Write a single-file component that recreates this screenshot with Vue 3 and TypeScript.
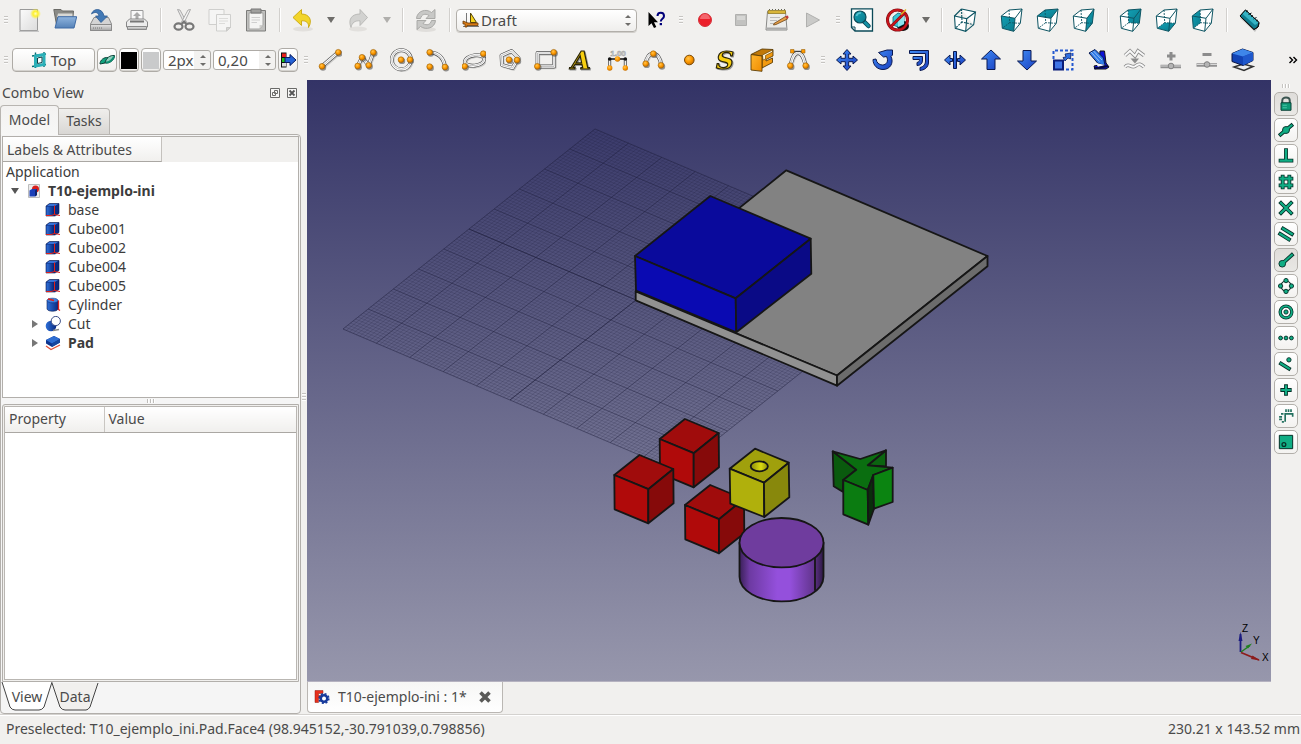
<script setup lang="ts">
import { ref } from 'vue'

interface Tool {
  kind: 'tool' | 'sep' | 'menu' | 'grip'
  icon?: string
  label?: string
  off?: boolean
}
interface Wire {
  id: string
  d: string
  dots: number[][]
}
interface Glyph {
  text: string
  x: number
  y: number
  look: string
}
interface Row {
  name: string
  icon: string
  level: number
  arrow?: 'open' | 'closed'
  bold?: boolean
}

const tool = (icon: string, label: string, off = false): Tool => ({ kind: 'tool', icon, label, off })
const sep: Tool = { kind: 'sep' }
const grip: Tool = { kind: 'grip' }
const menu = (label: string, off = false): Tool => ({ kind: 'menu', label, off })

const fileTools: Tool[] = [
  grip, tool('new', 'New'), tool('open', 'Open'), tool('save', 'Save'), tool('print', 'Print'), sep,
  tool('cut', 'Cut'), tool('copy', 'Copy', true), tool('paste', 'Paste'), sep,
  tool('undo', 'Undo'), menu('Undo history'), tool('redo', 'Redo', true), menu('Redo history', true), sep,
  tool('refresh', 'Refresh', true), sep,
]
const viewTools: Tool[] = [
  tool('whats', "What's this?"), grip,
  tool('record', 'Record macro'), tool('stop', 'Stop macro', true), tool('macros', 'Macros'), tool('play', 'Execute macro', true), grip,
  tool('fit', 'Fit all'), tool('drawstyle', 'Draw style'), menu('Draw style list'), sep,
  tool('axo', 'Axonometric'), sep,
  tool('front', 'Front'), tool('top', 'Top'), tool('right', 'Right'), sep,
  tool('rear', 'Rear'), tool('bottom', 'Bottom'), tool('left', 'Left'), sep,
  tool('ruler', 'Measure distance'),
]
const draftTools: Tool[] = [
  grip, tool('line', 'Line'), tool('wire', 'Wire'), tool('circle', 'Circle'), tool('arc', 'Arc'),
  tool('ellipse', 'Ellipse'), tool('polygon', 'Polygon'), tool('rectangle', 'Rectangle'), tool('text', 'Text'),
  tool('dimension', 'Dimension'), tool('bspline', 'B-spline'), tool('point', 'Point'), tool('shapestring', 'Shape string'),
  tool('facebinder', 'Facebinder'), tool('bezier', 'Bezier curve'), grip,
  tool('move', 'Move'), tool('rotate', 'Rotate'), tool('offset', 'Offset'), tool('trimex', 'Trimex'),
  tool('upgrade', 'Upgrade'), tool('downgrade', 'Downgrade'), tool('scale', 'Scale'), tool('edit', 'Edit'),
  tool('tospline', 'Wire to B-spline', true), tool('addpoint', 'Add point', true), tool('delpoint', 'Remove point', true),
  tool('shape2d', 'Shape 2D view'),
]
const snaps = [
  ['lock', 'Toggle snap', true], ['mid', 'Midpoint'], ['perp', 'Perpendicular'], ['grid', 'Grid'], ['inter', 'Intersection'],
  ['parallel', 'Parallel'], ['end', 'Endpoint', true], ['angle', 'Angle'], ['center', 'Center'], ['ext', 'Extension'],
  ['near', 'Near'], ['ortho', 'Ortho'], ['dims', 'Dimensions'], ['plane', 'Working plane'],
] as [string, string, boolean?][]

/* Letters that are part of an icon */
const glyphs: Record<string, Glyph> = {
  text: { text: 'A', x: 11, y: 21, look: 'gly' },
  shapestring: { text: 'S', x: 11, y: 21, look: 'gly' },
  dimension: { text: '1.00', x: 12, y: 8, look: 'tiny' },
}

const wires: Wire[] = [
  { id: 'line', d: 'M4 18.3L20.3 4.3', dots: [[4, 18.3], [20.3, 4.3]] },
  { id: 'wire', d: 'M3.7 18L8 9.3L14.7 17.3L19.3 4.3', dots: [[3.7, 18], [8, 9.3], [14.7, 17.3], [19.3, 4.3]] },
  { id: 'circle', d: 'M1.7 11.7a9.6 9.6 0 1 0 19.2 0a9.6 9.6 0 1 0 -19.2 0', dots: [[11, 11.7], [20, 11.7]] },
  { id: 'arc', d: 'M3.7 4.3Q17 5 19 19', dots: [[3.7, 4.3], [3.7, 18.7], [19, 19]] },
  { id: 'ellipse', d: 'M2.8 14C3.2 6.6 21.6 4.6 22.2 11C22 18.4 3.8 20 2.8 14Z', dots: [[21.3, 5.7], [2.7, 18.3]] },
  { id: 'polygon', d: 'M3.5 7.5L13.5 3L20.5 10L14.5 20L4 17Z', dots: [[11, 11.7], [19, 12]] },
  { id: 'rectangle', d: 'M3.5 5H20V18.5H3.5Z', dots: [[19.7, 4.3], [3.3, 18.3]] },
  { id: 'bspline', d: 'M3.7 16C4.5 2 18 2 19 17', dots: [[3.7, 15.7], [11.3, 5.7], [19, 17.3]] },
  { id: 'bezier', d: 'M4.3 17.7C6 12 7 5 12 5C17 5 18 12 19.7 17.7', dots: [[4.3, 17.7], [19.7, 17.7]] },
]

const cubeFaces: Record<string, string> = {
  front: '1.3,8 15,10.3 13.7,23.3 2.3,20.3',
  top: '1.3,8 9,2 22,1 15,10.3',
  right: '15,10.3 22,1 20.3,15.3 13.7,23.3',
  rear: '9,2 22,1 20.3,15.3 9.7,14.7',
  bottom: '2.3,20.3 9.7,14.7 20.3,15.3 13.7,23.3',
  left: '1.3,8 9,2 9.7,14.7 2.3,20.3',
}

const rows: Row[] = [
  { name: 'T10-ejemplo-ini', icon: 'doc', level: 0, arrow: 'open', bold: true },
  { name: 'base', icon: 'box', level: 1 },
  { name: 'Cube001', icon: 'box', level: 1 },
  { name: 'Cube002', icon: 'box', level: 1 },
  { name: 'Cube004', icon: 'box', level: 1 },
  { name: 'Cube005', icon: 'box', level: 1 },
  { name: 'Cylinder', icon: 'cylinder', level: 1 },
  { name: 'Cut', icon: 'boolcut', level: 1, arrow: 'closed' },
  { name: 'Pad', icon: 'pad', level: 1, arrow: 'closed', bold: true },
]

/* Working plane: two families of parallel lines spanned by u and v */
const origin = [343, 329]
const u = [334, 142]
const v = [252, -200]
function gridPath(steps: number[]): string {
  return steps
    .map((t) => {
      const [x, y] = origin
      const a = `M${(x + u[0] * t).toFixed(1)} ${(y + u[1] * t).toFixed(1)}l${v[0]} ${v[1]}`
      const b = `M${(x + v[0] * t).toFixed(1)} ${(y + v[1] * t).toFixed(1)}l${u[0]} ${u[1]}`
      return a + b
    })
    .join('')
}
const minorGrid = gridPath(Array.from({ length: 101 }, (_, i) => i / 100))
const majorGrid = gridPath(Array.from({ length: 11 }, (_, i) => i / 10))
const axisGrid = gridPath([0.5])

const redCubes = [
  { x: 659.7, y: 439 },
  { x: 614.3, y: 475 },
  { x: 685, y: 505 },
]

const workbench = ref('Draft')
const lineWidth = ref('2px')
const textSize = ref('0,20')
</script>

<template>
  <div class="app">
    <svg class="sprite" aria-hidden="true">
      <defs>
        <radialGradient id="gDot" cx=".4" cy=".35" r=".7"><stop offset="0" stop-color="#ffc450" /><stop offset=".5" stop-color="#ff9a00" /><stop offset="1" stop-color="#c06a00" /></radialGradient>
        <linearGradient id="gBlue" x1="0" y1="0" x2="1" y2="1"><stop offset="0" stop-color="#3f8cf5" /><stop offset="1" stop-color="#1a3fc0" /></linearGradient>
        <linearGradient id="gPage" x1="0" y1="0" x2="1" y2="1"><stop offset="0" stop-color="#fbfbfb" /><stop offset="1" stop-color="#dcdcdc" /></linearGradient>
        <linearGradient id="gMetal" x1="0" y1="0" x2="0" y2="1"><stop offset="0" stop-color="#e6e6e6" /><stop offset="1" stop-color="#a4a4a4" /></linearGradient>
        <linearGradient id="gFolder" x1="0" y1="0" x2="0" y2="1"><stop offset="0" stop-color="#8fb4de" /><stop offset="1" stop-color="#5582b8" /></linearGradient>
        <linearGradient id="gTeal" x1="0" y1="0" x2="1" y2="1"><stop offset="0" stop-color="#13a0b4" /><stop offset="1" stop-color="#0a7a8c" /></linearGradient>
        <linearGradient id="gOrange" x1="0" y1="0" x2="1" y2="1"><stop offset="0" stop-color="#ffb62e" /><stop offset="1" stop-color="#f08c00" /></linearGradient>
        <linearGradient id="gSolid" x1="0" y1="0" x2="1" y2="0"><stop offset="0" stop-color="#2e70d8" /><stop offset="1" stop-color="#0a2a80" /></linearGradient>
        <radialGradient id="gGlow"><stop offset="0" stop-color="#fffcc0" /><stop offset=".45" stop-color="#fdf02c" /><stop offset="1" stop-color="#fdf02c" stop-opacity="0" /></radialGradient>
      </defs>

      <symbol id="new" viewBox="0 0 24 24"><path d="M3 1.5H20.5V22.5H3Z" fill="url(#gPage)" stroke="#999" /><path d="M2 23.3H22" stroke="#bbb" /><circle cx="18.5" cy="5.7" r="5.5" fill="url(#gGlow)" /></symbol>
      <symbol id="open" viewBox="0 0 24 24"><path d="M.8 1.5H8L9.500 3H20.500L19 19.500H4Z" fill="#8a8a86" stroke="#6a6a66" /><path d="M4 9L5 5.500H19.500V9Z" fill="#d8d8d4" /><path d="M5 8.700H23.700L21 20H2Z" fill="url(#gFolder)" stroke="#3f6ba5" /></symbol>
      <symbol id="save" viewBox="0 0 24 24"><path d="M5 9.500H19.500L22.500 16V22.500H1.500V16Z" fill="#d4d4d4" stroke="#8a8a8a" /><path d="M1.500 16.500H22.500V22.500H1.500Z" fill="url(#gMetal)" stroke="#8a8a8a" /><path d="M4 20H14" stroke="#777" stroke-dasharray="1 1" /><path d="M2.500 6C4 0 13.500-.5 15 8H18.500L12 14.500L6.500 8H10C9 4 6 3.500 2.500 6Z" fill="#4279b5" stroke="#2d5a92" stroke-width=".8" /></symbol>
      <symbol id="print" viewBox="0 0 24 24"><path d="M6 2.500H18V12H6Z" fill="#f8f8f8" stroke="#9a9a9a" /><path d="M12 4L16 8H13.500V11H10.500V8H8Z" fill="#aaa" /><path d="M4.500 11H19.500L22.500 14V19H1.500V14Z" fill="#ececec" stroke="#888" /><path d="M5 13.500H19" stroke="#777" stroke-width="2" /><path d="M2.500 18.500H21.500V21.500H2.500Z" fill="url(#gMetal)" stroke="#8a8a8a" /></symbol>
      <symbol id="cut" viewBox="0 0 24 24"><path d="M5.500 1.500L8 2L14.500 14L12.500 16Z" fill="#e6e6e6" stroke="#9a9a9a" stroke-width=".8" /><path d="M18.500 1.500L16 2L9.500 14L11.500 16Z" fill="#f4f4f4" stroke="#9a9a9a" stroke-width=".8" /><ellipse cx="6.500" cy="18.500" rx="4" ry="3.200" fill="none" stroke="#777" stroke-width="2.200" /><ellipse cx="17.500" cy="18.500" rx="4" ry="3.200" fill="none" stroke="#777" stroke-width="2.200" /><path d="M9.500 16L12 13.500L14.500 16" fill="none" stroke="#777" stroke-width="2" /></symbol>
      <symbol id="copy" viewBox="0 0 24 24"><g fill="#f5f5f4" stroke="#cfcfcd"><path d="M1 1.500H16V16.500H1Z" /><path d="M8.500 6.500H22.500V19.500L18.500 23H8.500Z" /></g><path d="M11 10.500H20M11 13H20M11 15.500H17" stroke="#dcdcda" /><path d="M18.500 23V19.500H22.500Z" fill="#d6d6d4" stroke="#c8c8c6" /></symbol>
      <symbol id="paste" viewBox="0 0 24 24"><path d="M2.500 2.500H21.500V23H2.500Z" fill="#c0c0be" stroke="#7c7c7a" /><path d="M5 5H19V17L15.500 21H5Z" fill="#f4f4f3" stroke="#a5a5a3" /><path d="M7.500 9.500H16M7.500 12H16M7.500 14.500H13" stroke="#cfcfcf" /><path d="M15.500 21V17H19Z" fill="#cfcfcd" /><path d="M7 1H17V5H7Z" fill="#a0a09e" stroke="#777" /></symbol>
      <symbol id="undo" viewBox="0 0 24 24"><ellipse cx="12" cy="21" rx="10" ry="2.500" fill="#e2e0dd" /><path d="M2 9.500L10.500 1.500V6C18 6 22 12 17.500 19.500C18 14.500 15 12.500 10.500 12.800V17.500Z" fill="#f2d52a" stroke="#c9a70c" stroke-width=".9" /></symbol>
      <symbol id="redo" viewBox="0 0 24 24"><ellipse cx="11" cy="21" rx="9" ry="2.500" fill="#e2e0dd" /><path d="M20.500 9.500L13 1.500V6C4 6 1 12 4 19.500C5 14.500 8 12.500 13 12.800V17.500Z" fill="#d2d2d0" stroke="#b5b5b3" stroke-width=".9" /></symbol>
      <symbol id="refresh" viewBox="0 0 24 24"><ellipse cx="12" cy="21.500" rx="10" ry="2.500" fill="#e0dedb" /><g fill="#c8c8c6" stroke="#a4a4a2" stroke-width=".9"><path d="M2.500 10.500C3 3 12 0 17.500 4.500L21 1.500V10.500H12L15 7.500C11 5 7.500 6.500 6.500 10.500Z" /><path d="M21.500 12.500C21 20 12 22.500 6.500 18.500L3 21.500V12.500H12L9 15.500C13 18 16.500 16.500 17.500 12.500Z" /></g></symbol>
      <symbol id="whats" viewBox="0 0 24 24"><path d="M4.500 4V18L7.500 15.200L10 20L12.300 19L10 14.200H14Z" fill="#000" /><path d="M13.500 8C13.500 3.500 20 3.500 20 8C20 11 16.800 10.500 16.800 13.500" fill="none" stroke="#00007a" stroke-width="2" /><path d="M15.700 15H18V17.200H15.700Z" fill="#00007a" /></symbol>
      <symbol id="record" viewBox="0 0 24 24"><circle cx="12" cy="12" r="6.500" fill="#ec1f2a" stroke="#d5333b" /><path d="M7 11A5 5 0 0 1 17 11Z" fill="#f4656c" /></symbol>
      <symbol id="stop" viewBox="0 0 24 24"><path d="M6.500 6.500H17.500V17.500H6.500Z" fill="#c2c2c0" stroke="#b0b0ae" /><path d="M8 8H16V12H8Z" fill="#d6d6d4" /></symbol>
      <symbol id="macros" viewBox="0 0 24 24"><path d="M2.500 3.500H20.500L22 22H1Z" fill="#ececea" stroke="#8a8a88" /><path d="M1.500 20.500H22" stroke="#aaa" stroke-width="2" /><path d="M3 2.500H20.500V5.500H3Z" fill="#d8b53a" stroke="#8a7014" stroke-width=".7" /><path d="M4 1.500H20" stroke="#665" stroke-dasharray="1 2" /><path d="M5 9.500H15M5 12.500H12M5 15.500H10" stroke="#bbb" /><path d="M9 15.500L20.500 8.500L22.500 11L11 16.500L8.500 17Z" fill="#e8a048" stroke="#6b4214" stroke-width=".8" /><path d="M20 8.500L23 7.500L23.500 9.500L22.500 11Z" fill="#c23b3b" /></symbol>
      <symbol id="play" viewBox="0 0 24 24"><path d="M5.500 5L18.500 12L5.500 19Z" fill="#cacac8" stroke="#b0b0ae" /></symbol>
      <symbol id="fit" viewBox="0 0 24 24"><path d="M1.500.8H22.500V23H5L1.500 19.500Z" fill="#fbfdfd" stroke="#0b4a58" stroke-width="1.300" /><path d="M1.500 19H5V23" fill="none" stroke="#0b4a58" /><path d="M13.500 13L18.500 18" stroke="#0b4a58" stroke-width="4.500" stroke-linecap="round" /><path d="M14 13.500L18.500 18" stroke="#1391a5" stroke-width="2.600" stroke-linecap="round" /><circle cx="10" cy="9" r="6" fill="url(#gTeal)" stroke="#0b4a58" stroke-width="1.200" /><path d="M6.500 8A4 4 0 0 1 11 5" fill="none" stroke="#59c3d2" stroke-width="1.500" /></symbol>
      <symbol id="drawstyle" viewBox="0 0 24 24"><ellipse cx="17" cy="18" rx="6" ry="5" fill="#0e0e0e" /><path d="M7 9L12 5L18 7V16L12 19L7 17Z" fill="#3cc7d6" stroke="#0b6a78" stroke-width=".8" /><path d="M12 19V10L18 7V16Z" fill="#8fe6ee" /><circle cx="11.500" cy="12" r="10" fill="none" stroke="#7c1014" stroke-width="3" /><circle cx="11.500" cy="12" r="10" fill="none" stroke="#c9141b" stroke-width="1.800" /><path d="M4.500 19L18.500 5" stroke="#7c1014" stroke-width="3" /><path d="M4.500 19L18.500 5" stroke="#c9141b" stroke-width="1.800" /><path d="M15 6.500L20 1.500" stroke="#e3b51b" stroke-width="1.500" /></symbol>
      <symbol id="axo" viewBox="0 0 24 24"><g fill="none" stroke="#0e5563" stroke-width="1.100"><path d="M1.500 8L13.700 10.700L12.700 23.400L2.300 20.300ZM8.500 1L22.500 4L20.700 16.700M1.500 8L8.500 1M13.700 10.700L22.500 4M12.700 23.400L20.700 16.700" fill="#fff" /><path d="M8.500 1L9 14L20.700 16.700M9 14L2.300 20.300" stroke-dasharray="2 1" /></g></symbol>
      <symbol v-for="(face, id) in cubeFaces" :id="id" :key="id" viewBox="0 0 24 24">
        <polygon points="1.300,8 9,2 22,1 20.300,15.300 13.700,23.300 2.300,20.300" fill="#fff" />
        <polygon :points="face" fill="url(#gTeal)" />
        <g fill="none" stroke="#0e5563" stroke-width="1"><path d="M1.300 8L15 10.300L13.700 23.300L2.300 20.300ZM1.300 8L9 2L22 1L20.300 15.300L13.700 23.300M15 10.300L22 1" /><path d="M9 2L9.700 14.700L20.300 15.300M9.700 14.700L2.300 20.300" stroke-dasharray="2 1" stroke-width=".9" /></g>
      </symbol>
      <symbol id="ruler" viewBox="0 0 24 24"><path d="M2 10L9 3L22 16L17 24Z" fill="#777" opacity=".4" /><path d="M2 8L7.500 2L21 14.500L20 19L16 21.500Z" fill="#0f7d90" stroke="#111" /><path d="M7.500 2L21 14.500L17 17L4 5.500Z" fill="#35b3c4" /><path d="M8 4L10 2.700M10.500 6.500L13.500 5M13 8.500L15 7.500M15.500 11L18.500 9.500M18 13L20 12" stroke="#071a1d" /><path d="M2 8L7.500 2L21 14.500L20 19L16 21.500Z" fill="none" stroke="#111" /></symbol>

      <symbol v-for="w in wires" :id="w.id" :key="w.id" viewBox="0 0 24 24">
        <path :d="w.d" class="shade" transform="translate(1 1)" />
        <path :d="w.d" class="rim" />
        <path :d="w.d" class="core" />
        <path :d="w.d" class="hair" />
        <circle v-for="(p, i) in w.dots" :key="'s' + i" :cx="p[0] + 1" :cy="p[1] + 1.200" r="3.200" fill="#444" opacity=".55" />
        <circle v-for="(p, i) in w.dots" :key="i" :cx="p[0]" :cy="p[1]" r="2.900" fill="url(#gDot)" stroke="#9a6410" stroke-width=".6" />
        <template v-if="w.id === 'bezier'"><path d="M6 3.300H18" stroke="#333" /><path d="M4.500 1.500H8V5H4.500ZM15.500 1.500H19V5H15.500Z" fill="#ff9a00" stroke="#9a6410" stroke-width=".6" /></template>
      </symbol>
      <symbol id="dimension" viewBox="0 0 24 24"><path d="M3.700 11V20M19.300 11V20" stroke="#555" stroke-width="3" /><path d="M3.700 11V20M19.300 11V20" stroke="#fff" stroke-width="1.200" /><path d="M3 11H20" stroke="#111" stroke-width="1.500" /><circle cx="3.700" cy="11" r="1.800" fill="#111" /><circle cx="19.300" cy="11" r="1.800" fill="#111" /><circle cx="3.700" cy="20" r="2.700" fill="url(#gDot)" /><circle cx="19.300" cy="20" r="2.700" fill="url(#gDot)" /><circle cx="11.500" cy="11" r="2.700" fill="url(#gDot)" /></symbol>
      <symbol id="point" viewBox="0 0 24 24"><circle cx="11.300" cy="12" r="4.800" fill="url(#gDot)" stroke="#7a4a08" /></symbol>
      <symbol id="facebinder" viewBox="0 0 24 24"><g stroke="#5c3d06" stroke-width=".9" stroke-linejoin="round"><path d="M12 8L23 3V8L16 11.500V13L22.500 10V14.500L12 20Z" fill="#f29a10" /><path d="M1 6.500L12 1L23 1.500V3L12 8Z" fill="#c07808" /><path d="M12.500 7L22.500 2V4L15.500 7.500V11L13 12Z" fill="#fff2d0" stroke-width=".6" /><path d="M1 6.500L12 8V23.300L1 22Z" fill="url(#gOrange)" /></g></symbol>
      <symbol id="move" viewBox="0 0 24 24"><path d="M12 1.500L16 6H13.700V10.300H18V8L22.500 12L18 16V13.700H13.700V18H16L12 22.500L8 18H10.300V13.700H6V16L1.500 12L6 8V10.300H10.300V6H8Z" class="blue" /></symbol>
      <symbol id="rotate" viewBox="0 0 24 24"><path d="M2 11.500C2 17.500 6.500 21.500 12 21.500C19.500 21.500 23 14.500 20 8.500L21.500 7V2H16L7.500 4.500L12.500 9L15.500 8.500C18 13 15.500 17 11.500 17C8 17 5.500 14.500 5 11Z" class="blue" /></symbol>
      <symbol id="offset" viewBox="0 0 24 24"><path d="M2.500 2.500H21.500V14C21.500 20 17 22 13 22.500V19.500C17 18.500 18.500 16 18.500 13V5.500H2.500Z" class="blue" /><path d="M6 8.500H15.500V12C15.500 15 14 17.500 10 17.500V14.500C12 14 12.500 13 12.500 11.500H6Z" class="blue" /></symbol>
      <symbol id="trimex" viewBox="0 0 24 24"><path d="M1.500 12L7 7V10.500H9.500V13.500H7V17ZM22.500 12L17 7V10.500H14.500V13.500H17V17Z" class="blue" /><path d="M10.500 3.500H13.500V20.500H10.500Z" class="blue" /></symbol>
      <symbol id="upgrade" viewBox="0 0 24 24"><path d="M12 2L21.500 11H16V21.500H8V11H2.500Z" class="blue" /></symbol>
      <symbol id="downgrade" viewBox="0 0 24 24"><path d="M12 22L21.500 13H16V2.500H8V13H2.500Z" class="blue" /></symbol>
      <symbol id="scale" viewBox="0 0 24 24"><path d="M2.500 11V2.500H21.500V21.500H14" fill="none" stroke="#2458d0" stroke-width="2" stroke-dasharray="3 2" /><path d="M3 12.500H12V21.500H3Z" fill="#3f74e6" stroke="#0a1c78" stroke-width="2" /><path d="M12 9.500L15 9L14 6L20 5L19.500 11L17 10L14 13Z" fill="#2f6fe0" stroke="#0a1c60" stroke-width=".8" /></symbol>
      <symbol id="edit" viewBox="0 0 24 24"><path d="M13 3H17.500L19 15L22 19L19 21H8L7 18L12 17Z" fill="#0d12d8" stroke="#111" /><path d="M2 5L8 1.500L16.500 10L18 17.500L11 15.500Z" fill="#2f7be8" stroke="#081850" /><path d="M4 4L12.500 13.500M6.500 3L15 12" stroke="#9cc2f5" stroke-width="1" /><path d="M9 15L18 17L11 19Z" fill="#f4f6fb" /><path d="M7 20.500L21 18" stroke="#060a40" stroke-width="2" /></symbol>
      <symbol id="tospline" viewBox="0 0 24 24"><g fill="none"><path d="M2 7.500L7 3L12 8L15 3L21 7.500M2 19C6 14 8 21 12.500 18C16 15 18 16 21 19" stroke="#8a8a8a" stroke-width="3.600" /><path d="M2 7.500L7 3L12 8L15 3L21 7.500M2 19C6 14 8 21 12.500 18C16 15 18 16 21 19" stroke="#f8f8f8" stroke-width="2" /></g><path d="M7.500 10.500H16L12 15.500Z" fill="#8c8c8c" /></symbol>
      <symbol id="addpoint" viewBox="0 0 24 24"><path d="M12 4V12.500M8 8H16.500" stroke="#8c8c8c" stroke-width="3" /><path d="M1.500 18.500H22" stroke="#909090" stroke-width="3.500" /><path d="M1.500 18H22" stroke="#d8d8d8" /><circle cx="12" cy="18" r="2.800" fill="#b4b4b4" stroke="#808080" /></symbol>
      <symbol id="delpoint" viewBox="0 0 24 24"><path d="M7.500 6.500H16.500" stroke="#8c8c8c" stroke-width="3" /><path d="M1.500 17H22" stroke="#909090" stroke-width="3.500" /><path d="M1.500 16.500H22" stroke="#d8d8d8" /><circle cx="12" cy="16.500" r="2.800" fill="#b4b4b4" stroke="#808080" /></symbol>
      <symbol id="shape2d" viewBox="0 0 24 24"><path d="M3 19L12 16L22 18.500L13 22.500Z" fill="#eee" stroke="#333" stroke-width="1.500" /><path d="M1 5.500L11.500 1L22 4.500V12.500L12 17.500L1 13.500Z" fill="#1243b5" stroke="#0a1440" /><path d="M1 5.500L11.500 1L22 4.500L12 8.500Z" fill="#3e86ea" /><path d="M12 8.500L22 4.500V12.500L12 17.500Z" fill="#1f58cc" /></symbol>

      <symbol id="plane" viewBox="0 0 24 24"><path d="M4 4H20V20H4Z" fill="#10ad84" stroke="#052f27" stroke-width="1.200" /><circle cx="9.500" cy="15" r="2.300" fill="none" stroke="#052f27" stroke-width="1.500" /></symbol>
      <symbol id="lock" viewBox="0 0 24 24"><path d="M7.500 12V8C7.500 3 16.500 3 16.500 8V12" fill="none" stroke="#3b5551" stroke-width="2.400" /><path d="M6 10.500H18V19.500H6Z" fill="#0f9a77" stroke="#0a4036" stroke-width="1.200" /><path d="M8 13.500H13M8 16.500H13" stroke="#55cdb0" /></symbol>
      <symbol id="mid" viewBox="0 0 24 24"><path d="M5.500 17.500L18.500 6.500" class="so" /><circle cx="12" cy="12" r="4.200" class="sd" /><path d="M5.500 17.500L18.500 6.500" class="si" /></symbol>
      <symbol id="perp" viewBox="0 0 24 24"><path d="M12 5V17.500M5.500 17.500H18.500" class="so" /><path d="M12 5V17.500M5.500 17.500H18.500" class="si" /></symbol>
      <symbol id="grid" viewBox="0 0 24 24"><path d="M8 5.500V18.500M16 5.500V18.500M5.500 8H18.500M5.500 16H18.500" class="so" /><path d="M8 5.500V18.500M16 5.500V18.500M5.500 8H18.500M5.500 16H18.500" class="si" /></symbol>
      <symbol id="inter" viewBox="0 0 24 24"><path d="M6 6L18 18M18 6L6 18" class="so" /><path d="M6 6L18 18M18 6L6 18" class="si" /></symbol>
      <symbol id="parallel" viewBox="0 0 24 24"><path d="M8.500 5.500L19 12M5 12L15.500 18.500" class="so" /><path d="M8.500 5.500L19 12M5 12L15.500 18.500" class="si" /></symbol>
      <symbol id="end" viewBox="0 0 24 24"><path d="M8 16L19 6" class="so" /><circle cx="7.500" cy="16.500" r="4" class="sd" /><path d="M8 16L19 6" class="si" /></symbol>
      <symbol id="angle" viewBox="0 0 24 24"><circle cx="12" cy="12" r="6" fill="none" stroke="#052f27" stroke-width="1.300" /><circle v-for="p in [[12, 5.500], [12, 18.500], [5.500, 12], [18.500, 12]]" :key="p.join()" :cx="p[0]" :cy="p[1]" r="2.600" class="sd" /></symbol>
      <symbol id="center" viewBox="0 0 24 24"><circle cx="12" cy="12" r="7" fill="none" stroke="#052f27" stroke-width="4" /><circle cx="12" cy="12" r="7" fill="none" stroke="#10ad84" stroke-width="2.200" /><circle cx="12" cy="12" r="2.500" class="sd" /></symbol>
      <symbol id="ext" viewBox="0 0 24 24"><circle v-for="x in [5.500, 12, 18.500]" :key="x" :cx="x" cy="12" r="2.300" class="sd" /></symbol>
      <symbol id="near" viewBox="0 0 24 24"><path d="M6 11.500L15.500 17.500" class="so" /><path d="M6 11.500L15.500 17.500" class="si" /><circle cx="15.500" cy="7" r="2.600" class="sd" /></symbol>
      <symbol id="ortho" viewBox="0 0 24 24"><path d="M12 7.500V16.500M7.500 12H16.500" class="so" /><path d="M12 7.500V16.500M7.500 12H16.500" class="si" /></symbol>
      <symbol id="dims" viewBox="0 0 24 24"><path d="M11 19V9.500H20V13M6 9.500H9M7 19H9.500" fill="none" stroke="#23705f" stroke-width="2" /><path d="M11 5.500H20M5.500 12V17" fill="none" stroke="#23705f" stroke-width="3.500" stroke-dasharray="2 1" /></symbol>

      <symbol id="doc" viewBox="0 0 16 16"><path d="M2.500 1.500H13.500V14.500H2.500Z" fill="#ececec" stroke="#bcbcbc" /><circle cx="9.500" cy="6" r="3.500" fill="#d8201c" /><path d="M3.500 7.500L6 6H11V12L9 13.500H3.500Z" fill="#1b3fb8" /><path d="M9 7.500V13.500L11 12V6Z" fill="#0c2270" /></symbol>
      <symbol id="box" viewBox="0 0 16 16"><path d="M1 4L4.500 1.500H14V11.500L10 14H1Z" fill="#0b2a80" stroke="#071a50" stroke-width=".6" /><path d="M1.500 4.500H8.500V13.500H1.500Z" fill="url(#gSolid)" /><path d="M2 4L4.500 2H13L10 4Z" fill="#3671d6" /><path d="M9.500 3.500V12.500M1 13.500H6L9.500 12.500L15 13.500" fill="none" stroke="#e0201a" /></symbol>
      <symbol id="cylinder" viewBox="0 0 16 16"><path d="M2 3.500V12C3 15 12 15 13 12V3.500Z" fill="url(#gSolid)" stroke="#071a50" stroke-width=".6" /><ellipse cx="7.500" cy="3.500" rx="5.500" ry="2.300" fill="#3f82de" stroke="#0b2a80" stroke-width=".6" /><path d="M9 3.500L3 2M13.500 3.500V12.500L15 13.500" fill="none" stroke="#e0201a" stroke-width="1.300" /></symbol>
      <symbol id="boolcut" viewBox="0 0 16 16"><circle cx="6" cy="10" r="5.300" fill="url(#gSolid)" /><path d="M8 14.500L14 13.500" stroke="#888" stroke-width="1.500" /><circle cx="10.800" cy="5" r="4.600" fill="#fff" stroke="#3d4f88" /></symbol>
      <symbol id="pad" viewBox="0 0 16 16"><path d="M1 11L6 14.500L15 10" fill="none" stroke="#e05038" stroke-width="1.200" /><path d="M1 5L9 1L15 4V7.500L7 12L1 8.500Z" fill="#0d358f" /><path d="M1 5L9 1L15 4L7 8.500Z" fill="#2e6dd2" /><path d="M7 8.500L15 4V7.500L7 12Z" fill="#16479f" /></symbol>
      <symbol id="freecad" viewBox="0 0 16 16"><path d="M1 1.500H9V4.500H4.500V6.500H8V9.500H4.500V13.500H1Z" fill="#e8301c" stroke="#8c1a10" stroke-width=".5" /><circle cx="10" cy="9.500" r="3.200" fill="none" stroke="#173a9c" stroke-width="2.600" /><circle cx="10" cy="9.500" r="4.800" fill="none" stroke="#173a9c" stroke-width="1.600" stroke-dasharray="2 1.770" /><circle cx="10" cy="9.500" r="1.700" fill="#fff" /></symbol>
      <symbol id="draft" viewBox="0 0 18 18"><path d="M4.500 2V14M1 15.500H17" stroke="#777" /><path d="M8.500 2V11.500H14.500Z" fill="#f7d21a" stroke="#55460a" /><path d="M1 10L6 12H16V14.500H5V16H3V13H1Z" fill="#d87a14" stroke="#6a3a06" stroke-width=".8" /></symbol>
      <symbol id="planebtn" viewBox="0 0 18 18"><path d="M1 5L15 3M1 15.500L15 13.500M4.500 1.500V17M13 1V16" stroke="#0a6a70" stroke-width="1.400" /><path d="M4.500 5L13 3.500V13.500L4.500 15Z" fill="#fff" stroke="#2bb0b8" stroke-width="3" /><path d="M6.500 7L11 6V11.500L6.500 12.500Z" fill="#fff" stroke="#083f45" /></symbol>
      <symbol id="leaf" viewBox="0 0 18 18"><path d="M2 13C2 9 6 6 10 6.500L7 12Z" fill="#12a37f" stroke="#0a4238" /><path d="M7 12C8 7 12 4 16.500 4.500C16.500 9 12 12.500 7 12Z" fill="#8fd0bd" stroke="#0a4238" /><path d="M8 11.500C11 11.500 15 9 16 5.500" fill="none" stroke="#0f8f72" stroke-width="2" /></symbol>
      <symbol id="apply" viewBox="0 0 18 18"><path d="M2 1.500H7.500V16.500H2Z" fill="#111" /><path d="M3 2.500H7V6H3Z" fill="#e8201c" /><path d="M3 7H7V11H3Z" fill="#18c01c" /><path d="M3 12H7V15.500H3Z" fill="#ddd" /><path d="M6 6.500H11V3.500L17 9L11 14.500V11.500H6Z" fill="#2563d6" stroke="#0a1c60" /></symbol>
    </svg>

    <header class="toolbars">
      <div class="bar" role="toolbar" aria-label="File and view">
        <template v-for="(t, i) in fileTools" :key="i">
          <button v-if="t.kind === 'tool'" type="button" class="tool" :aria-label="t.label" :disabled="t.off"><svg class="ic"><use :href="'#' + t.icon" /></svg></button>
          <button v-else-if="t.kind === 'menu'" type="button" class="drop" :class="{ dim: t.off }" :aria-label="t.label"></button>
          <span v-else :class="t.kind"></span>
        </template>
        <div class="workbench">
          <svg class="ic18"><use href="#draft" /></svg>
          <select v-model="workbench" aria-label="Workbench"><option>Draft</option></select>
          <span class="updown"></span>
        </div>
        <template v-for="(t, i) in viewTools" :key="'v' + i">
          <button v-if="t.kind === 'tool'" type="button" class="tool" :aria-label="t.label" :disabled="t.off"><svg class="ic"><use :href="'#' + t.icon" /></svg></button>
          <button v-else-if="t.kind === 'menu'" type="button" class="drop" :aria-label="t.label"></button>
          <span v-else :class="t.kind"></span>
        </template>
      </div>

      <div class="bar" role="toolbar" aria-label="Draft">
        <span class="grip"></span>
        <div class="settings">
          <button type="button" class="raised wide"><svg class="ic18"><use href="#planebtn" /></svg>Top</button>
          <button type="button" class="raised" aria-label="Construction mode"><svg class="ic18"><use href="#leaf" /></svg></button>
          <button type="button" class="raised" aria-label="Line color"><i class="swatch black"></i></button>
          <button type="button" class="raised" aria-label="Face color"><i class="swatch grey"></i></button>
          <div class="spin small"><input v-model="lineWidth" aria-label="Line width" /><span class="updown"></span></div>
          <div class="spin"><input v-model="textSize" aria-label="Text size" /><span class="updown"></span></div>
          <button type="button" class="raised" aria-label="Apply style"><svg class="ic18"><use href="#apply" /></svg></button>
        </div>
        <template v-for="(t, i) in draftTools" :key="i">
          <button v-if="t.kind === 'tool'" type="button" class="tool" :aria-label="t.label" :disabled="t.off">
            <svg class="ic">
              <use :href="'#' + t.icon" />
              <text v-if="glyphs[t.icon!]" :x="glyphs[t.icon!].x" :y="glyphs[t.icon!].y" :class="glyphs[t.icon!].look" text-anchor="middle">{{ glyphs[t.icon!].text }}</text>
            </svg>
          </button>
          <span v-else :class="t.kind"></span>
        </template>
        <button type="button" class="more" aria-label="More tools"><svg viewBox="0 0 8 8"><path d="M.5 1L3.500 4L.5 7M4.500 1L7.500 4L4.500 7" fill="none" stroke="#000" stroke-width="1.400" /></svg></button>
      </div>
    </header>

    <main class="work">
      <aside class="combo">
        <div class="title">
          <span>Combo View</span>
          <button type="button" aria-label="Float"><svg viewBox="0 0 12 12"><path d="M1.500 1.500H10.500V10.500H1.500Z" fill="#f7f7f6" stroke="#6a6a68" /><path d="M5.500 3.500H8.500V6.500H5.500ZM3.500 5.500H6.500V8.500H3.500Z" fill="none" stroke="#6a6a68" /></svg></button>
          <button type="button" aria-label="Close"><svg viewBox="0 0 12 12"><path d="M1.500 1.500H10.500V10.500H1.500Z" fill="#f7f7f6" stroke="#6a6a68" /><path d="M3.500 3.500L8.500 8.500M8.500 3.500L3.500 8.500" stroke="#555" stroke-width="1.800" /></svg></button>
        </div>
        <div class="tabs" role="tablist">
          <button type="button" role="tab" aria-selected="true" class="on">Model</button>
          <button type="button" role="tab" aria-selected="false">Tasks</button>
        </div>
        <div class="pane">
          <section class="tree">
            <div class="treehead"><span>Labels &amp; Attributes</span></div>
            <p>Application</p>
            <ul>
              <li v-for="r in rows" :key="r.name" :class="['level' + r.level, { bold: r.bold }]">
                <i class="arrow" :class="r.arrow"></i>
                <svg class="ic16"><use :href="'#' + r.icon" /></svg>
                <span>{{ r.name }}</span>
              </li>
            </ul>
          </section>
          <div class="split"></div>
          <section class="props">
            <table>
              <thead><tr><th scope="col" class="prop">Property</th><th scope="col">Value</th></tr></thead>
            </table>
          </section>
          <div class="foot" role="tablist">
            <button type="button" role="tab" aria-selected="true"><svg viewBox="0 0 50 30"><path d="M0 0L8 25Q10 28 13 28H37Q40 28 42 25L50 0" fill="#fff" stroke="#444" /></svg><span>View</span></button>
            <button type="button" role="tab" aria-selected="false"><svg viewBox="0 0 46 30"><path d="M0 1L8 25Q10 28 13 28H34Q36 28 38 25L46 1" fill="#f1f0ee" stroke="#444" /></svg><span>Data</span></button>
          </div>
        </div>
      </aside>
      <div class="gutter"></div>

      <section class="center">
        <div class="viewport">
          <svg class="scene" viewBox="307 80 964 602" role="img" aria-label="3D scene">
            <defs>
              <linearGradient id="gCyl" x1="0" x2="1"><stop offset="0" stop-color="#3a2058" /><stop offset=".12" stop-color="#6d3aa2" /><stop offset=".45" stop-color="#9450dc" /><stop offset=".6" stop-color="#9450dc" /><stop offset=".88" stop-color="#63358f" /><stop offset="1" stop-color="#2c1842" /></linearGradient>
              <linearGradient id="gHole" x1="0" x2="1"><stop offset="0" stop-color="#8c8c0c" /><stop offset=".6" stop-color="#dcdc10" /><stop offset="1" stop-color="#8c8c0c" /></linearGradient>
            </defs>
            <g fill="none" stroke="#1c1c38">
              <path :d="minorGrid" stroke-width="1" stroke-opacity=".18" />
              <path :d="majorGrid" stroke-width="1" stroke-opacity=".32" />
              <path :d="axisGrid" stroke-width="1" stroke-opacity=".4" />
            </g>
            <g stroke="#161616" stroke-width="1.800" stroke-linejoin="round">
              <polygon points="786.300,170.300 987.500,256 837,375.500 635.700,291.300" fill="#828282" />
              <polygon points="635.700,291.300 837,375.500 837,385.700 635.700,300.300" fill="#919191" />
              <polygon points="837,375.500 987.500,256 987.500,266.300 837,385.700" fill="#6c6c6c" />
              <polygon points="710.300,196 810.700,238.700 735.700,298.300 635,256" fill="#0a0a9c" />
              <polygon points="635,256 735.700,298.300 736.300,332.300 636,290.700" fill="#0a0ab2" />
              <polygon points="735.700,298.300 810.700,238.700 811.300,273.700 736.300,332.300" fill="#0a0a86" />

              <g v-for="(c, i) in redCubes" :key="i" :transform="`translate(${c.x} ${c.y})`">
                <polygon points="0,0 25.200,-20 59,-6 34,14.200" fill="#a00c0c" />
                <polygon points="0,0 34,14.200 34,48.300 .3,34.300" fill="#b00a0a" />
                <polygon points="34,14.200 59,-6 59.300,28.300 34,48.300" fill="#860a0a" />
              </g>

              <polygon points="755,448.700 788.700,462.700 764,482.700 729.700,468.700" fill="#a0a00c" />
              <polygon points="729.700,468.700 764,482.700 764.300,517 730.300,503.700" fill="#b0b00c" />
              <polygon points="764,482.700 788.700,462.700 789.300,497.300 764.300,517" fill="#88880c" />
              <ellipse cx="759.300" cy="466.300" rx="8.600" ry="5" fill="url(#gHole)" />

              <polygon points="832.700,451.300 856.300,469.700 843.300,480 842.700,491.700 833.700,486.300" fill="#0a5a0e" />
              <polygon points="886,450.300 867.700,465.300 886,466.300" fill="#0b6410" />
              <polygon points="832.700,451.300 860.300,459 886,450.300 867.700,465.300 892.700,467.700 873.300,475 867.700,490 843.300,480 856.300,469.700" fill="#0a6e10" />
              <polygon points="843.300,480 867.700,490 868.300,524.700 843.300,514.300" fill="#0b7c11" />
              <polygon points="867.700,490 873.300,475 874,508.700 868.300,524.700" fill="#0a2e0c" />
              <polygon points="873.300,475 892.700,467.700 892.700,502 874,508.700" fill="#0b8411" />

              <path d="M739.500 542.700V576.700A42 24.700 0 0 0 823.500 576.700V542.700Z" fill="url(#gCyl)" />
              <ellipse cx="781.500" cy="542.700" rx="42" ry="24.700" fill="#6f3c9e" />
              <path d="M815 557.700V590.700" />
            </g>
          </svg>
          <svg class="axes" viewBox="0 0 34 42" role="img" aria-label="Axis cross">
            <path d="M6.500 26V8" stroke="#1c1c80" stroke-width="1.800" /><path d="M6.500 6L8.500 15H4.500Z" fill="#1c1c80" />
            <path d="M7 26L16 19.500" stroke="#208020" stroke-width="1.500" /><path d="M18 17.500L14 22.500L11.500 20Z" fill="#208020" />
            <path d="M7 26.500L25 34" stroke="#8c1c1c" stroke-width="1.800" /><path d="M26 34.500L17 33L18.500 29.500Z" fill="#8c1c1c" />
            <text x="8" y="6">Z</text><text x="19" y="18">Y</text><text x="28" y="35">X</text>
          </svg>
        </div>
        <div class="doctabs" role="tablist">
          <div class="doctab">
            <svg class="ic16"><use href="#freecad" /></svg>
            <span role="tab" aria-selected="true">T10-ejemplo-ini : 1*</span>
            <button type="button" aria-label="Close document"><svg viewBox="0 0 12 12"><path d="M1.500 1.500L10.500 10.500M10.500 1.500L1.500 10.500" stroke="#5a5a58" stroke-width="3.600" /></svg></button>
          </div>
        </div>
      </section>

      <aside class="snapbar" role="toolbar" aria-label="Snap">
        <span class="vgrip"></span>
        <button v-for="[icon, label, on] in snaps" :key="icon" type="button" class="snap" :class="{ on }" :aria-label="label"><svg class="ic20"><use :href="'#' + icon" /></svg></button>
      </aside>
    </main>

    <footer class="status"><span>Preselected: T10_ejemplo_ini.Pad.Face4 (98.945152,-30.791039,0.798856)</span><span>230.21 x 143.52 mm</span></footer>
  </div>
</template>

<style>
body { margin: 0; background: #f1f0ee; }
</style>

<style scoped>
.app { display: flex; flex-direction: column; height: 100vh; overflow: hidden; background: #f1f0ee; color: #4a4a4a; font: 14px/18px "Noto Sans", "Open Sans", sans-serif; }
.app *, .app *::before, .app *::after { box-sizing: border-box; }
.sprite { position: absolute; width: 0; height: 0; }
button, input, select { font: inherit; color: inherit; margin: 0; padding: 0; border: 0; background: none; min-width: 0; outline: 0; }
svg { display: block; flex: none; overflow: visible; }
.ic { width: 24px; height: 24px; }
.ic20 { width: 20px; height: 20px; }
.ic18 { width: 18px; height: 18px; }
.ic16 { width: 16px; height: 16px; }

.shade, .rim, .core, .hair { fill: none; stroke-linejoin: round; }
.shade { stroke: #555; stroke-width: 3.5px; opacity: .25; }
.rim { stroke: #4a4a4a; stroke-width: 3.8px; }
.core { stroke: #fff; stroke-width: 2.6px; }
.hair { stroke: #999; stroke-width: .6px; }
.blue { fill: url(#gBlue); stroke: #0a1850; stroke-width: 1px; stroke-linejoin: round; }
.gly { font: italic bold 25px "DejaVu Serif", serif; fill: #f8cf10; stroke: #2a2408; stroke-width: 1.2px; filter: drop-shadow(1px 1px 0 #999); }
.tiny { font: bold 8px "Liberation Sans", sans-serif; fill: #fff; stroke: #999; stroke-width: .6px; }
.so { fill: none; stroke: #052f27; stroke-width: 4.6px; stroke-linecap: square; }
.si { fill: none; stroke: #10ad84; stroke-width: 2.6px; stroke-linecap: square; }
.sd { fill: #10ad84; stroke: #052f27; stroke-width: 1.1px; }

.toolbars { flex: none; }
.bar { display: flex; align-items: center; height: 40px; }
.tool { flex: none; width: 36px; height: 36px; display: grid; place-items: center; }
.drop { flex: none; width: 20px; height: 36px; display: grid; place-items: center; }
.drop::before { content: ""; border: 4px solid transparent; border-top: 6px solid #6e6d6a; border-bottom: 0; }
.drop.dim::before { border-top-color: #b0afac; }
.sep { flex: none; width: 11px; height: 24px; display: flex; justify-content: center; }
.sep::before { content: ""; width: 2px; border-left: 1px solid #d2d0cd; border-right: 1px solid #fff; }
.grip { flex: none; width: 13px; height: 9px; display: flex; justify-content: center; }
.grip:first-child { width: 11px; }
.grip::before { content: ""; width: 4px; background: repeating-linear-gradient(#c6c4c1 0 1px, #fbfbfb 1px 2px, transparent 2px 3px); }
.workbench { flex: none; position: relative; width: 181px; height: 23px; margin: 0 1px; border: 1px solid #b2afaa; border-radius: 4px; background: linear-gradient(#fff, #efeeec); display: flex; align-items: center; padding-left: 5px; box-shadow: 0 1px 0 #d0ceca; }
.workbench select { appearance: none; flex: 1; height: 21px; padding-left: 1px; font-size: 15px; }
.workbench .updown { position: absolute; right: 1px; top: 0; bottom: 0; width: 14px; pointer-events: none; }
.updown { display: flex; flex-direction: column; align-items: center; justify-content: center; gap: 5px; flex: none; width: 15px; }
.updown::before { content: ""; border: 3px solid transparent; border-top: 0; border-bottom: 3px solid #6e6d6a; }
.updown::after { content: ""; border: 3px solid transparent; border-bottom: 0; border-top: 3px solid #6e6d6a; }
.settings { display: flex; gap: 2px; margin: 0 1px; }
.raised { width: 20px; height: 24px; border: 1px solid #aeaba6; border-radius: 4px; background: linear-gradient(#fff, #f0efed); box-shadow: inset 0 -1px 0 #d4d2ce; display: flex; align-items: center; justify-content: center; font-size: 15px; }
.raised.wide { width: 83px; gap: 2px; }
.swatch { flex: none; width: 16px; height: 17px; }
.swatch.black { background: #000; }
.swatch.grey { background: #c9cacb; }
.spin { display: flex; width: 63px; height: 20px; margin: 2px 0; border: 1px solid #aeaba6; border-radius: 3px; background: linear-gradient(90deg, #fff calc(100% - 16px), #f3f2f0 0); font-size: 15px; }
.spin.small { width: 48px; }
.spin input { flex: 1; width: 0; padding-left: 4px; }
.more { margin: 0 3px 0 auto; width: 9px; }
.more svg { width: 8px; height: 8px; }

.work { flex: 1; min-height: 0; display: flex; }
.combo { flex: none; width: 301px; display: flex; flex-direction: column; }
.title { flex: none; height: 25px; display: flex; align-items: center; gap: 5px; padding: 0 3px 0 2px; }
.title span { flex: 1; }
.title button { width: 12px; height: 12px; }
.tabs { flex: none; height: 30px; display: flex; align-items: flex-end; margin-bottom: -1px; position: relative; }
.tabs button { height: 27px; width: 51px; padding-bottom: 2px; border: 1px solid #b8b5b1; border-left: 0; border-radius: 0 4px 0 0; background: linear-gradient(#efeeec, #d9d7d4); }
.tabs .on { height: 30px; width: 59px; border-left: 1px solid #b8b5b1; border-bottom: 0; border-radius: 4px 4px 0 0; background: linear-gradient(#f3f2f1, #f7f7f6); }
.pane { flex: 1; min-height: 0; display: flex; flex-direction: column; border: 1px solid #b2afab; border-radius: 0 4px 4px 4px; background: #f5f5f5; padding: 1px; }
.tree { flex: 265; border: 1px solid #b2afab; background: #fff; color: #3c3c3c; line-height: 19px; }
.treehead { height: 25px; background: #f1f0ee; }
.treehead span { display: block; width: 159px; height: 25px; line-height: 25px; padding-left: 4px; border-right: 1px solid #c4c1bd; border-bottom: 1px solid #aaa7a3; background: linear-gradient(#fff, #f1f0ee); color: #4a4a4a; }
.tree p { margin: 0; padding-left: 3px; }
.tree ul { list-style: none; margin: 0; padding: 0; }
.tree li { display: flex; align-items: center; height: 19px; }
.arrow { flex: none; width: 20px; display: grid; place-items: center; }
.arrow.open::before { content: ""; border: 4px solid transparent; border-top: 6px solid #555; border-bottom: 0; }
.arrow.closed::before { content: ""; border: 4px solid transparent; border-left: 6px solid #777; border-right: 0; }
.level0 { padding-left: 2px; }
.level0 .ic16 { margin: 0 6px 0 1px; }
.level1 { padding-left: 22px; }
.level1 .ic16 { margin: 0 7px 0 0; }
.bold { font-weight: 700; }
.split { flex: none; height: 6px; display: flex; justify-content: center; align-items: center; }
.split::before { content: ""; width: 8px; height: 4px; background: repeating-linear-gradient(90deg, #bfbdba 0 1px, #fff 1px 2px, transparent 2px 3px); }
.props { flex: 278; border: 1px solid #b2afab; padding: 2px; border-radius: 3px 0 0 0; display: flex; background: #fff; box-shadow: inset 0 0 0 1px #f1f0ee, inset 0 0 0 2px #b9b6b2; }
table { flex: 1; align-self: flex-start; border-collapse: collapse; }
th { height: 26px; padding: 0 4px; text-align: left; font-weight: 400; background: linear-gradient(#fff, #f0efed); border-bottom: 1px solid #aaa7a3; }
.prop { width: 99px; border-right: 1px solid #c9c6c2; }
.foot { flex: none; height: 30px; display: flex; }
.foot button { position: relative; width: 50px; height: 29px; }
.foot button + button { width: 46px; }
.foot svg { position: absolute; left: 0; top: 0; width: 100%; height: 30px; }
.foot span { position: relative; }
.gutter { flex: none; width: 6px; display: flex; align-items: center; justify-content: center; }
.gutter::before { content: ""; width: 4px; height: 9px; background: repeating-linear-gradient(#c6c4c1 0 1px, #fff 1px 2px, transparent 2px 3px); }

.center { flex: 1; min-width: 0; display: flex; flex-direction: column; }
.viewport { flex: 1; min-height: 0; position: relative; background: linear-gradient(#333366, #9797ac); box-shadow: inset 0 -1px 0 #b5b2c0; }
.scene { width: 100%; height: 100%; }
.axes { position: absolute; right: 3px; bottom: 14px; width: 34px; height: 42px; font: 10px "Liberation Sans", sans-serif; fill: #000; }
.doctabs { flex: none; height: 32px; display: flex; align-items: flex-start; }
.doctab { display: flex; align-items: center; height: 31px; width: 196px; padding: 0 11px 0 6px; border: 1px solid #bab7b3; border-top: 0; border-radius: 0 0 4px 4px; background: linear-gradient(#f6f6f5, #fff); }
.doctab span { flex: 1; padding-left: 8px; white-space: nowrap; }
.doctab button { width: 12px; height: 12px; }

.snapbar { flex: none; width: 30px; display: flex; flex-direction: column; align-items: center; gap: 2px; }
.vgrip { width: 8px; height: 10px; background: repeating-linear-gradient(90deg, #c6c4c1 0 1px, #fff 1px 2px, transparent 2px 3px) 0 4px / 8px 4px no-repeat; }
.snap { flex: none; width: 24px; height: 24px; border: 1px solid #b2afaa; border-radius: 5px; background: linear-gradient(#fff, #f3f2f0); display: grid; place-items: center; }
.snap.on { background: linear-gradient(#dfddda, #e9e8e5); }

.status { flex: none; height: 30px; display: flex; align-items: center; justify-content: space-between; padding: 0 1px 2px 6px; border-top: 1px solid #d4d2cf; box-shadow: inset 0 1px 0 #fff; }
</style>
